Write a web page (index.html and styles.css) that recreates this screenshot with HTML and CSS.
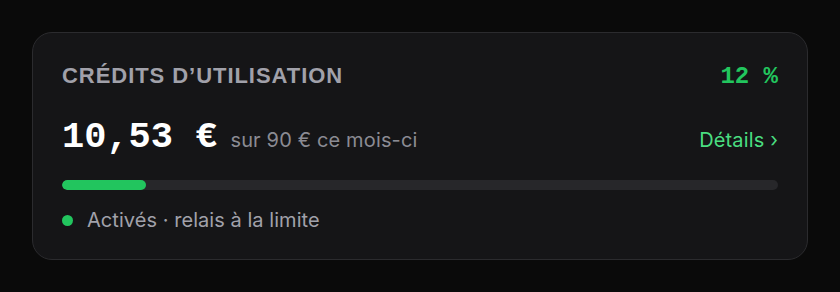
FILE: index.html
```html
<!DOCTYPE html>
<html lang="fr">
<head>
<meta charset="utf-8">
<link rel="stylesheet" href="styles.css">
</head>
<body>
<section class="card">
  <div class="row head">
    <span class="title">Crédits d’utilisation</span>
    <span class="pct">12 %</span>
  </div>
  <div class="row main">
    <div class="amount"><span class="value">10,53 €</span><span class="of">sur 90 € ce mois-ci</span></div>
    <a class="details">Détails ›</a>
  </div>
  <div class="track"><div class="fill" style="width:11.8%"></div></div>
  <div class="status"><span class="dot"></span><span>Activés · relais à la limite</span></div>
</section>
</body>
</html>
```
FILE: styles.css
```css
html, body { margin: 0; background: #0a0a0a; }
body { padding: 32px; font-family: Inter, "Noto Sans", sans-serif; }
.card {
  box-sizing: border-box;
  width: 776px;
  height: 228px;
  background: #151517;
  border: 1px solid #2b2b2e;
  border-radius: 20px;
  padding: 30px 29px 0 29px;
}
.row { display: flex; justify-content: space-between; align-items: baseline; }
.title {
  font-family: "Liberation Sans", Arial, sans-serif;
  text-transform: uppercase;
  font-weight: 700;
  font-size: 22px;
  letter-spacing: 0.95px;
  color: #a1a1aa;
}
.pct {
  font-family: "Liberation Mono", monospace;
  font-weight: 700;
  font-size: 24px;
  color: #22c55e;
}
.main { margin-top: 26px; }
.amount { display: flex; align-items: baseline; gap: 13px; }
.value {
  font-family: "Liberation Mono", monospace;
  font-weight: 700;
  font-size: 37px;
  color: #fff;
}
.of { font-size: 20px; letter-spacing: 0.15px; color: #8b8b93; }
.details { font-size: 20px; letter-spacing: 0.15px; color: #4ade80; }
.track {
  margin-top: 22px;
  height: 10px;
  border-radius: 5px;
  background: #27272a;
  overflow: hidden;
}
.fill { height: 100%; background: #22c55e; border-radius: 5px; }
.status { display: flex; align-items: center; gap: 14px; margin-top: 18px; font-size: 20px; letter-spacing: 0.05px; color: #a1a1aa; }
.dot { width: 11px; height: 11px; border-radius: 50%; background: #22c55e; }
```
